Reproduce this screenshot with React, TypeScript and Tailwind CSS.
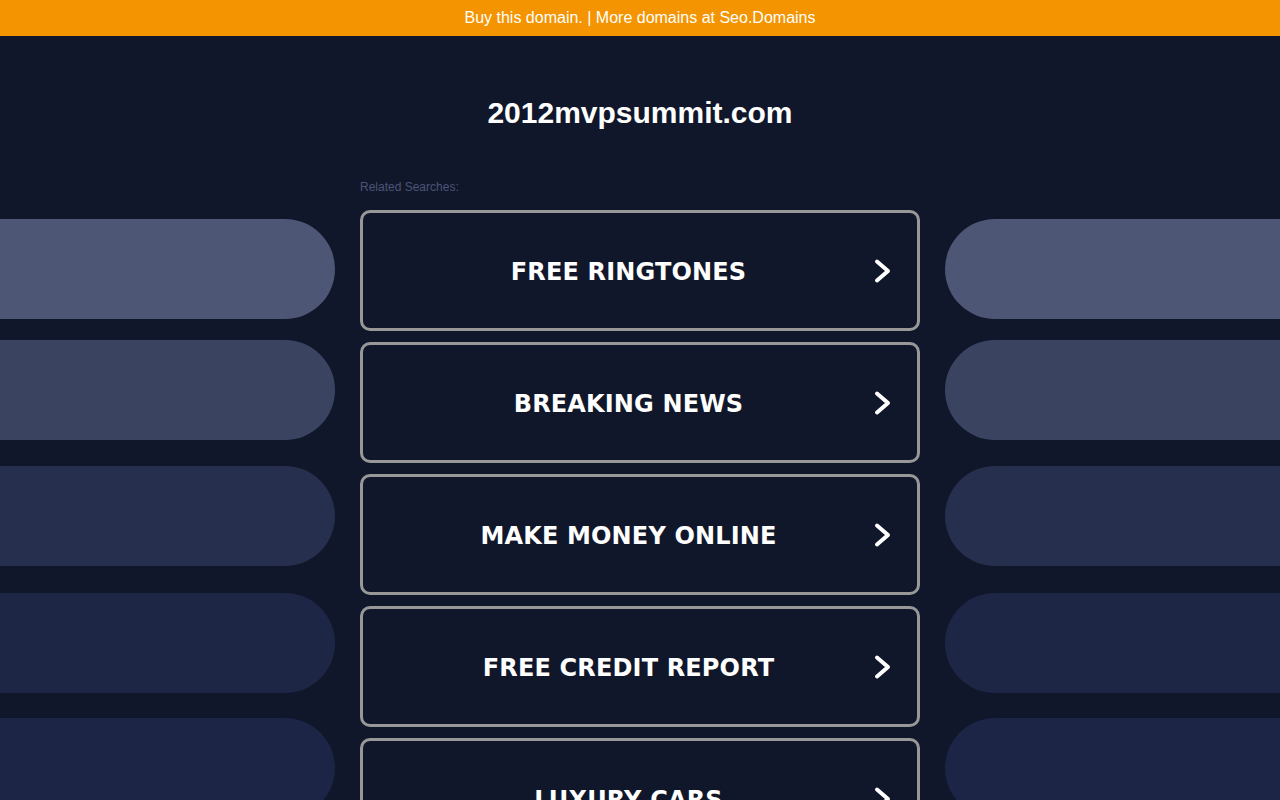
import React from "react";

const items = ["FREE RINGTONES", "BREAKING NEWS", "MAKE MONEY ONLINE", "FREE CREDIT REPORT", "LUXURY CARS"];

function Chevron() {
  return (
    <svg width="17" height="25" viewBox="0 0 17 25" className="absolute right-[26px] top-1/2 -translate-y-1/2">
      <polyline points="3,3 14,12.5 3,22" fill="none" stroke="#ffffff" strokeWidth="4" strokeLinecap="round" strokeLinejoin="round" />
    </svg>
  );
}

function Pills({ side }: { side: "left" | "right" }) {
  const r = side === "left" ? "rounded-r-[50px]" : "rounded-l-[50px]";
  return (
    <div className="flex flex-col pt-[40px]">
      <div className={`h-[100px] bg-[#4d5674] ${r}`} />
      <div className={`mt-[21px] h-[100px] bg-[#3a4461] ${r}`} />
      <div className={`mt-[26px] h-[100px] bg-[#262f4e] ${r}`} />
      <div className={`mt-[27px] h-[100px] bg-[#1e2646] ${r}`} />
      <div className={`mt-[25px] h-[100px] bg-[#1c2545] ${r}`} />
    </div>
  );
}

export default function App() {
  return (
    <div className="min-h-[800px] bg-[#11172b] font-['Liberation_Sans',Arial,sans-serif]">
      <div className="flex h-9 items-center justify-center bg-[#f39400] text-[16px] text-white">
        Buy this domain. | More domains at Seo.Domains
      </div>
      <div className="pt-[59px] text-center text-[30px] font-bold leading-[36px] text-white">
        2012mvpsummit.com
      </div>
      <div className="mt-[48px] grid grid-cols-[1fr_560px_1fr] gap-x-[25px]">
        <Pills side="left" />
        <div className="flex flex-col">
          <div className="text-[12px] leading-[16px] text-[#4b5476]">Related Searches:</div>
          <div className="mt-[15px] flex flex-col gap-[11px]">
            {items.map((t) => (
              <div
                key={t}
                className="relative flex h-[121px] items-center justify-center rounded-[10px] border-[3px] border-[#989898] pr-[23px] pt-[2px]"
              >
                <span className="font-['DejaVu_Sans',Verdana,sans-serif] text-[24px] font-bold tracking-[0.15px] text-white">
                  {t}
                </span>
                <Chevron />
              </div>
            ))}
          </div>
        </div>
        <Pills side="right" />
      </div>
    </div>
  );
}
